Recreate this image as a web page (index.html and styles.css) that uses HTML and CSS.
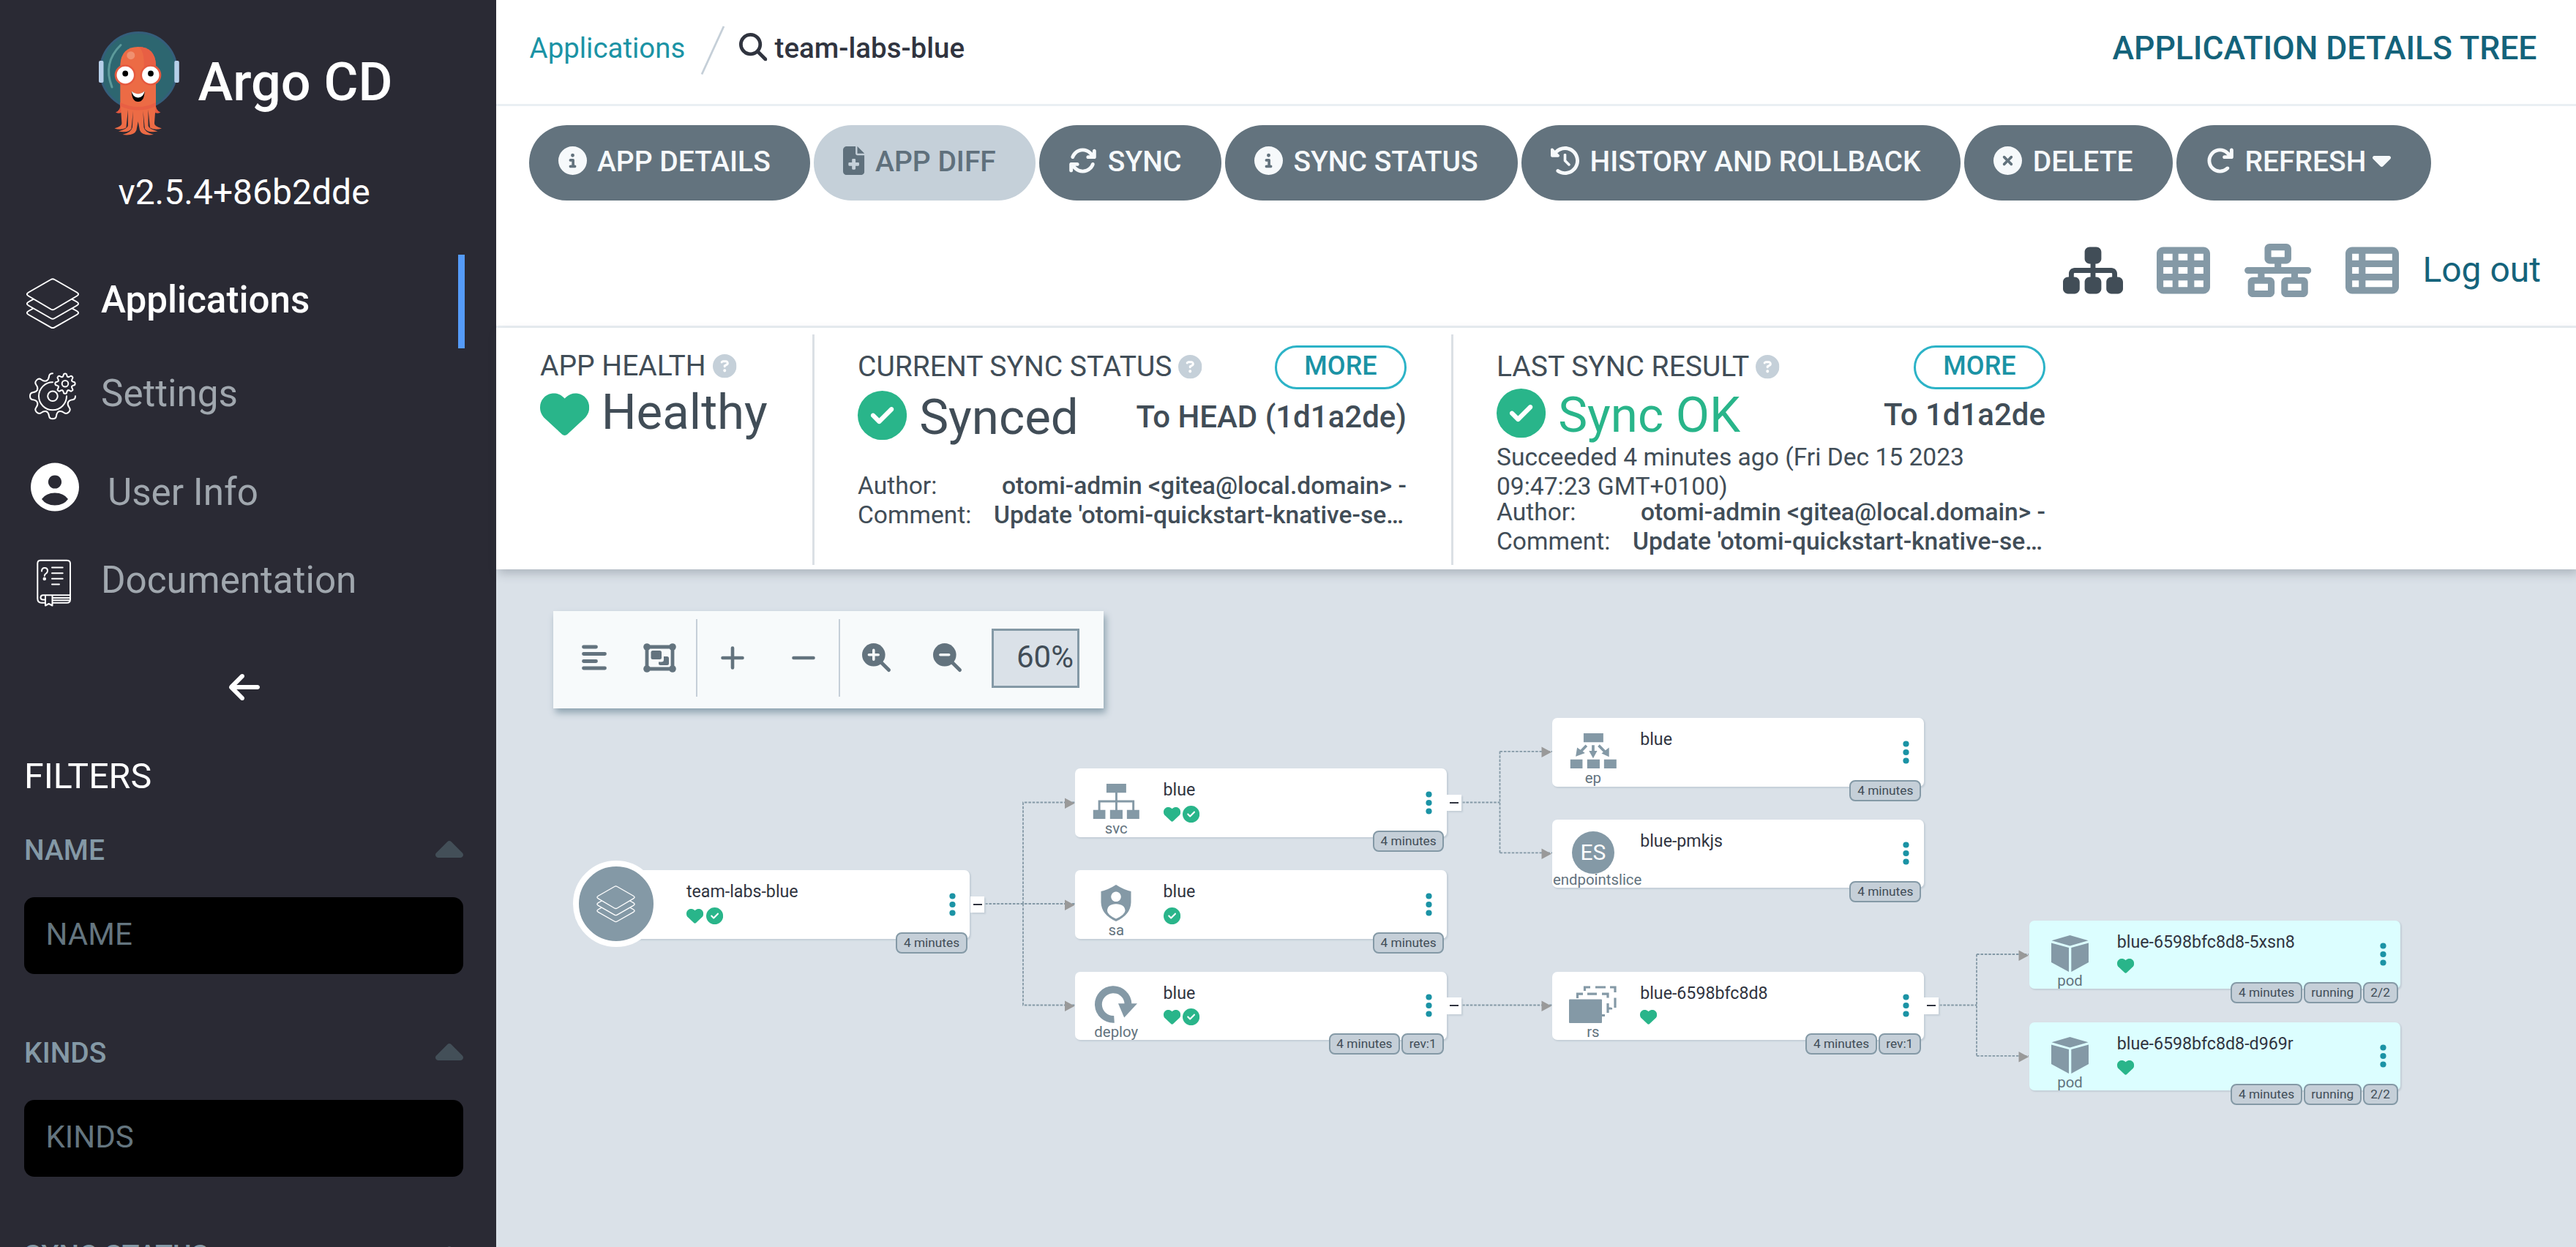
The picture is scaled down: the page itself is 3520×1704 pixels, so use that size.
FILE: index.html
```html
<!DOCTYPE html>
<html lang="en">
<head>
<meta charset="utf-8">
<title>team-labs-blue - Application Details Tree - Argo CD</title>
<link rel="stylesheet" href="styles.css">
</head>
<body>
<svg class="defs" width="0" height="0" aria-hidden="true">
  <defs>
    <symbol id="i-info" viewBox="0 0 512 512"><path d="M256 512A256 256 0 1 0 256 0a256 256 0 1 0 0 512zM216 336h24V272H216c-13.3 0-24-10.7-24-24s10.7-24 24-24h48c13.3 0 24 10.7 24 24v88h8c13.3 0 24 10.7 24 24s-10.7 24-24 24H216c-13.3 0-24-10.7-24-24s10.7-24 24-24zm40-208a32 32 0 1 1 0 64 32 32 0 1 1 0-64z"/></symbol>
    <symbol id="i-check" viewBox="0 0 512 512"><path d="M256 512A256 256 0 1 0 256 0a256 256 0 1 0 0 512zM369 209L241 337c-9.4 9.4-24.6 9.4-33.9 0l-64-64c-9.4-9.4-9.4-24.6 0-33.9s24.6-9.4 33.9 0l47 47L335 175c9.4-9.4 24.6-9.4 33.9 0s9.4 24.6 0 33.9z"/></symbol>
    <symbol id="i-xmark" viewBox="0 0 512 512"><path d="M256 512A256 256 0 1 0 256 0a256 256 0 1 0 0 512zM175 175c9.4-9.4 24.6-9.4 33.9 0l47 47 47-47c9.4-9.4 24.6-9.4 33.9 0s9.4 24.6 0 33.9l-47 47 47 47c9.4 9.4 9.4 24.6 0 33.9s-24.6 9.4-33.9 0l-47-47-47 47c-9.4 9.4-24.6 9.4-33.9 0s-9.4-24.6 0-33.9l47-47-47-47c-9.4-9.4-9.4-24.6 0-33.9z"/></symbol>
    <symbol id="i-help" viewBox="0 0 512 512"><path d="M256 512A256 256 0 1 0 256 0a256 256 0 1 0 0 512zM169.8 165.3c7.9-22.3 29.1-37.3 52.8-37.3h58.3c34.9 0 63.1 28.3 63.1 63.1c0 22.6-12.1 43.5-31.7 54.8L280 264.4c-.2 13-10.9 23.6-24 23.6c-13.3 0-24-10.7-24-24V250.5c0-8.6 4.6-16.5 12.1-20.8l44.3-25.4c4.7-2.7 7.6-7.7 7.6-13.1c0-8.4-6.8-15.1-15.1-15.1H222.6c-3.4 0-6.4 2.1-7.5 5.3l-.4 1.2c-4.4 12.5-18.2 19-30.6 14.6s-19-18.2-14.6-30.6l.4-1.2zM224 352a32 32 0 1 1 64 0 32 32 0 1 1 -64 0z"/></symbol>
    <symbol id="i-heart" viewBox="0 0 512 512"><path d="M47.6 300.4L228.3 469.1c7.5 7 17.4 10.9 27.7 10.9s20.2-3.9 27.7-10.9L464.4 300.4c30.4-28.3 47.6-68 47.6-109.5v-5.8c0-69.9-50.5-129.5-119.4-141C347 36.5 300.6 51.4 268 84L256 96 244 84c-32.6-32.6-79-47.5-124.6-39.9C50.5 55.6 0 115.2 0 185.1v5.8c0 41.5 17.2 81.2 47.6 109.5z"/></symbol>
    <symbol id="i-diff" viewBox="0 0 384 512"><path d="M64 0C28.7 0 0 28.7 0 64V448c0 35.3 28.7 64 64 64H320c35.3 0 64-28.7 64-64V160H256c-17.7 0-32-14.3-32-32V0H64zM256 0V128H384L256 0zM160 240c0-8.8 7.2-16 16-16h32c8.8 0 16 7.2 16 16v48h48c8.8 0 16 7.2 16 16v32c0 8.8-7.2 16-16 16H224v48c0 8.8-7.2 16-16 16H176c-8.8 0-16-7.2-16-16V352H112c-8.8 0-16-7.2-16-16V304c0-8.8 7.2-16 16-16h48V240z"/></symbol>
    <symbol id="i-search" viewBox="0 0 512 512"><path d="M416 208c0 45.9-14.9 88.3-40 122.7L502.6 457.4c12.5 12.5 12.5 32.8 0 45.3s-32.8 12.5-45.3 0L330.7 376c-34.4 25.2-76.8 40-122.7 40C93.1 416 0 322.9 0 208S93.1 0 208 0S416 93.1 416 208zM208 352a144 144 0 1 0 0-288 144 144 0 1 0 0 288z"/></symbol>
    <symbol id="i-sync" viewBox="0 0 512 512"><path d="M105.1 202.6c7.7-21.8 20.2-42.3 37.8-59.8c62.5-62.5 163.8-62.5 226.3 0L386.3 160H352c-17.7 0-32 14.3-32 32s14.3 32 32 32H463.5c0 0 0 0 0 0h.4c17.7 0 32-14.3 32-32V80c0-17.7-14.3-32-32-32s-32 14.3-32 32v35.2L414.4 97.6c-87.5-87.5-229.3-87.5-316.8 0C73.2 122 55.6 150.7 44.8 181.4c-5.9 16.7 2.9 34.9 19.5 40.8s34.9-2.9 40.8-19.5zM39 289.3c-5 1.5-9.8 4.2-13.7 8.2c-4 4-6.7 8.8-8.1 14c-.3 1.2-.6 2.5-.8 3.8c-.3 1.7-.4 3.4-.4 5.1V432c0 17.7 14.3 32 32 32s32-14.3 32-32V396.9l17.6 17.5c87.5 87.4 229.3 87.4 316.7 0c24.4-24.4 42.1-53.1 52.9-83.7c5.9-16.7-2.9-34.9-19.5-40.8s-34.9 2.9-40.8 19.5c-7.7 21.8-20.2 42.3-37.8 59.8c-62.5 62.5-163.8 62.5-226.3 0l-.1-.1L125.6 352H160c17.7 0 32-14.3 32-32s-14.3-32-32-32H48.4c-1.6 0-3.2 .1-4.8 .3s-3.1 .5-4.6 1z"/></symbol>
    <symbol id="i-refresh" viewBox="0 0 512 512"><path d="M386.3 160H336c-17.7 0-32 14.3-32 32s14.3 32 32 32H464c17.7 0 32-14.3 32-32V64c0-17.7-14.3-32-32-32s-32 14.3-32 32v51.2L414.4 97.6c-87.5-87.5-229.3-87.5-316.8 0s-87.5 229.3 0 316.8s229.3 87.5 316.8 0c12.5-12.5 12.5-32.8 0-45.3s-32.8-12.5-45.3 0c-62.5 62.5-163.8 62.5-226.3 0s-62.5-163.8 0-226.3s163.8-62.5 226.3 0L386.3 160z"/></symbol>
    <symbol id="i-history" viewBox="0 0 512 512"><path d="M75 75L41 41C25.9 25.9 0 36.6 0 57.9V168c0 13.3 10.7 24 24 24H134.1c21.4 0 32.1-25.9 17-41l-30.8-30.8C155 85.5 203 64 256 64c106 0 192 86 192 192s-86 192-192 192c-40.8 0-78.6-12.7-109.7-34.4c-14.5-10.1-34.4-6.6-44.6 7.9s-6.6 34.4 7.9 44.6C151.2 495 201.7 512 256 512c141.4 0 256-114.6 256-256S397.4 0 256 0C185.3 0 121.3 28.7 75 75zm181 53c-13.3 0-24 10.7-24 24V256c0 6.4 2.5 12.5 7 17l72 72c9.4 9.4 24.6 9.4 33.9 0s9.4-24.6 0-33.9l-65-65V152c0-13.3-10.7-24-24-24z"/></symbol>
    <symbol id="i-caret-down" viewBox="0 192 320 192"><path d="M137.4 374.6c12.5 12.5 32.8 12.5 45.3 0l128-128c9.2-9.2 11.9-22.9 6.9-34.9s-16.6-19.8-29.6-19.8L32 192c-12.9 0-24.6 7.8-29.6 19.8s-2.2 25.7 6.9 34.9l128 128z"/></symbol>
    <symbol id="i-caret-up" viewBox="0 128 320 192"><path d="M182.6 137.4c-12.5-12.5-32.8-12.5-45.3 0l-128 128c-9.2 9.2-11.9 22.9-6.9 34.9s16.6 19.8 29.6 19.8H288c12.9 0 24.6-7.8 29.6-19.8s2.2-25.7-6.9-34.9l-128-128z"/></symbol>
    <symbol id="i-arrow-left" viewBox="0 0 448 512"><path d="M9.4 233.4c-12.5 12.5-12.5 32.8 0 45.3l160 160c12.5 12.5 32.8 12.5 45.3 0s12.5-32.8 0-45.3L109.2 288 416 288c17.7 0 32-14.3 32-32s-14.3-32-32-32l-306.7 0L214.6 118.6c12.5-12.5 12.5-32.8 0-45.3s-32.8-12.5-45.3 0l-160 160z"/></symbol>
    <symbol id="i-sitemap" viewBox="0 0 576 512"><path d="M208 80c0-26.5 21.5-48 48-48h64c26.5 0 48 21.5 48 48v64c0 26.5-21.5 48-48 48h-8v40H464c30.9 0 56 25.1 56 56v32h8c26.5 0 48 21.5 48 48v64c0 26.5-21.5 48-48 48H464c-26.5 0-48-21.5-48-48V368c0-26.5 21.5-48 48-48h8V288c0-4.4-3.6-8-8-8H312v40h8c26.5 0 48 21.5 48 48v64c0 26.5-21.5 48-48 48H256c-26.5 0-48-21.5-48-48V368c0-26.5 21.5-48 48-48h8V280H112c-4.4 0-8 3.6-8 8v32h8c26.5 0 48 21.5 48 48v64c0 26.5-21.5 48-48 48H48c-26.5 0-48-21.5-48-48V368c0-26.5 21.5-48 48-48h8V288c0-30.9 25.1-56 56-56H264V192h-8c-26.5 0-48-21.5-48-48V80z"/></symbol>
    <symbol id="i-grid" viewBox="0 0 512 512"><path fill-rule="evenodd" d="M64 32C28.7 32 0 60.7 0 96v320c0 35.3 28.7 64 64 64h384c35.3 0 64-28.7 64-64V96c0-35.3-28.7-64-64-64zM64 96h88v64H64zM208 96h88v64h-88zM360 96h88v64h-88zM64 224h88v64H64zM208 224h88v64h-88zM360 224h88v64h-88zM64 352h88v64H64zM208 352h88v64h-88zM360 352h88v64h-88z"/></symbol>
    <symbol id="i-network" viewBox="0 0 640 512"><path fill-rule="evenodd" d="M256 64H384v64H256V64zM240 0c-26.5 0-48 21.5-48 48v96c0 26.5 21.5 48 48 48h48v32H32c-17.7 0-32 14.3-32 32s14.3 32 32 32h96v32H80c-26.5 0-48 21.5-48 48v96c0 26.5 21.5 48 48 48H240c26.5 0 48-21.5 48-48V368c0-26.5-21.5-48-48-48H192V288H448v32H400c-26.5 0-48 21.5-48 48v96c0 26.5 21.5 48 48 48H560c26.5 0 48-21.5 48-48V368c0-26.5-21.5-48-48-48H512V288h96c17.7 0 32-14.3 32-32s-14.3-32-32-32H352V192h48c26.5 0 48-21.5 48-48V48c0-26.5-21.5-48-48-48H240zM96 448V384H224v64H96zm320-64H544v64H416V384z"/></symbol>
    <symbol id="i-list" viewBox="0 0 512 512"><path fill-rule="evenodd" d="M0 96C0 60.7 28.7 32 64 32H448c35.3 0 64 28.7 64 64V416c0 35.3-28.7 64-64 64H64c-35.3 0-64-28.7-64-64V96zm64 0v64h64V96H64zm384 0H192v64H448V96zM64 224v64h64V224H64zm384 0H192v64H448V224zM64 352v64h64V352H64zm384 0H192v64H448V352z"/></symbol>
    <symbol id="i-stack" viewBox="3 10 72 70"><path fill="none" stroke="currentColor" stroke-linejoin="round" d="M36.5 12Q39 10.4 41.5 12L72 29.5Q76.3 32 72 34.5L41.5 52.5Q39 54 36.5 52.5L6 34.5Q1.7 32 6 29.5ZM12.5 38.8L6 42.5Q1.7 45 6 47.5L36.5 65Q39 66.5 41.5 65L72 47.5Q76.3 45 72 42.5L65.5 38.8M12.5 51.3L6 55Q1.7 57.5 6 60L36.5 77.3Q39 78.8 41.5 77.3L72 60Q76.3 57.5 72 55L65.5 51.3"/></symbol>
    <symbol id="i-dots" viewBox="0 0 9 32"><circle cx="4.5" cy="4.5" r="4.1"/><circle cx="4.5" cy="16" r="4.1"/><circle cx="4.5" cy="27.5" r="4.1"/></symbol>
    <symbol id="i-svc" viewBox="0 0 64 50"><path d="M18.500 0h27.500v12.500h-27.500zM0 36.500h17v12.500h-17zM23.500 36.500h17.500v12.500h-17.500zM47 36.500h17.300v12.500h-17.300z"/><path fill="none" stroke="currentColor" stroke-width="3" d="M32.300 12v25M8.500 37V24.500H56V37"/></symbol>
    <symbol id="i-ep" viewBox="0 0 64 50"><path d="M18.500 0h27.500v12.500h-27.500zM0 36.500h17v12.500h-17zM23.500 36.500h17.500v12.500h-17.500zM47 36.500h17.300v12.500h-17.300zM26 24.500h11.500l-5.700 10.500zM9.500 20l11 7.500-13 5zM54 20l-10.500 8 10.500 5z"/><path fill="none" stroke="currentColor" stroke-width="3.800" d="M31.800 16.500v11M22.500 17l-9 9.500M39.500 17l10 10"/></symbol>
    <symbol id="i-sa" viewBox="0 0 42 50"><path fill-rule="evenodd" d="M21 0Q31 6.500 41.500 9V24Q41 41 21 50Q1 41 .5 24V9Q11 6.500 21 0ZM21 9.500a6.800 6.800 0 1 0 .01 0ZM21 26.300C13 26.300 9 30 9 35.500Q9 41 21 46.500Q33 41 33.500 35.500C33.500 30 29 26.300 21 26.300Z"/></symbol>
    <symbol id="i-deploy" viewBox="0 0 58 51"><path fill="none" stroke="currentColor" stroke-width="9.800" d="M26.500 45.800A20.300 20.300 0 1 1 45.500 25"/><path d="M32 24.300H58L40.200 43.500Z"/></symbol>
    <symbol id="i-rs" viewBox="0 0 65 51"><rect y="18.500" width="45" height="32.500" rx="1"/><path fill="none" stroke="currentColor" stroke-width="3.200" d="M11.500 17V11.200H19M25 11.200H38M45 11.200H53V16.500M53 24V37M49 40.500H45M53 31h4.500V30M21.500 7V2H29M36 2H50M56 2H63V9M63 16.500V30"/></symbol>
    <symbol id="i-pod" viewBox="0 0 51 50"><path d="M25.500 0L50.500 7.200L25.500 14.500L.500 7.200ZM0 10.500L24 17V50L0 37ZM51 10.500L27.300 17V50L51 37Z"/></symbol>
    <path id="tooth" d="M-8.700 20.900Q-5.500 22.500-5 27Q-4.500 31 0 31Q4.500 31 5 27Q5.500 22.500 8.700 20.900"/>
    <g id="cog"><use href="#tooth"/><use href="#tooth" transform="rotate(45)"/><use href="#tooth" transform="rotate(90)"/><use href="#tooth" transform="rotate(135)"/><use href="#tooth" transform="rotate(180)"/><use href="#tooth" transform="rotate(225)"/><use href="#tooth" transform="rotate(270)"/><use href="#tooth" transform="rotate(315)"/></g>
  </defs>
</svg>

<div class="layout">
  <aside class="sidebar">
    <div class="brand">
      <svg class="brand-logo" viewBox="134 40 113 146">
        <circle cx="189.300" cy="96.500" r="52" fill="#2d6670" stroke="#355e7b" stroke-width="3"/>
        <rect x="135" y="83" width="6.500" height="30" rx="2" fill="#b6cfe9"/><rect x="238.300" y="83" width="6.500" height="30" rx="2" fill="#b6cfe9"/>
        <path d="M165 61.500Q140 86 153 119" fill="none" stroke="#5c9a9b" stroke-width="3" stroke-linecap="round"/>
        <path d="M165 140Q165 151 158 153.500Q164 156.500 169 152ZM212.400 140Q212.400 151 219.400 153.500Q213.400 156.500 208.400 152Z" fill="#e6593f"/>
        <path fill="#ec6b45" d="M164.500 140H213L211 168Q210 172 221 175.500Q212 178.500 205 174.500L202.500 150L202.500 172Q203.500 176 215.500 179.500Q202 182 198 176L195.500 152L196.500 174Q198 181 210 184Q194 186 191 178L188.700 166L186.400 178Q183.400 186 167.400 184Q179.400 181 180.900 174L181.900 152L179.400 176Q175.400 182 161.900 179.500Q173.900 176 174.900 172V150L172.400 174.500Q165.400 178.500 156.400 175.500Q167.400 172 166.400 168Z"/>
        <path fill="#ec6b45" d="M164.300 146V88Q166 64 188.700 64Q211.500 64 213 88V146Q188.700 154 164.300 146Z"/>
        <path fill="#e85f44" d="M190 64Q211.500 65 213 88V100H196Q199 72 190 64ZM164.300 140Q188.700 152 213 140V145Q188.700 156 164.300 145Z"/>
        <circle cx="171" cy="102.500" r="14.300" fill="#e6593f"/><circle cx="206" cy="102.500" r="14.300" fill="#e6593f"/>
        <circle cx="171.200" cy="102.500" r="11.700" fill="#fff"/><circle cx="205.800" cy="102.500" r="11.700" fill="#fff"/>
        <circle cx="171.200" cy="100.500" r="3.900" fill="#000"/><circle cx="206" cy="100.500" r="3.900" fill="#000"/>
        <path d="M179.700 125Q188.700 132 197.600 125Q197 139 188.700 139Q180.500 139 179.700 125Z" fill="#000"/>
        <path d="M179.700 124.500Q188.700 132 197.600 124.500Q196 133 188.700 133.500Q181.500 133 179.700 124.500Z" fill="#fff"/>
        <ellipse cx="178.800" cy="75.700" rx="5.500" ry="5.500" fill="#f09070"/>
      </svg>
      <span class="brand-name">Argo CD</span>
    </div>
    <div class="version">v2.5.4+86b2dde</div>
    <nav class="nav">
      <a class="nav-item nav-item-active">
        <svg class="nav-icon" viewBox="0 0 80 80"><use href="#i-stack" x="3" y="10" width="72" height="70" stroke-width="2"/></svg>
        <span>Applications</span>
      </a>
      <a class="nav-item">
        <svg class="nav-icon nav-icon-line" viewBox="0 0 80 80">
          <g transform="translate(39 43.300)">
            <use href="#tooth"/><use href="#tooth" transform="rotate(45)"/><use href="#tooth" transform="rotate(90)"/><use href="#tooth" transform="rotate(135)"/><use href="#tooth" transform="rotate(-45)"/>
            <path d="M-8.700-20.900Q-5.500-22.500-5-27Q-4.500-31 0-31M20.900 8.700Q22.500 5.500 27 5Q31 4.500 31 0M0-19A19 19 0 1 0 19 0"/>
            <circle r="6.800"/>
          </g>
          <g transform="translate(56 26.200)"><g class="cog-small" transform="scale(.44)"><use href="#cog"/></g><circle r="4.300"/></g>
        </svg>
        <span>Settings</span>
      </a>
      <a class="nav-item nav-item-user">
        <svg class="nav-icon" viewBox="0 0 80 80"><path fill="currentColor" fill-rule="evenodd" d="M42 -.5a33 33 0 1 0 .01 0ZM42 16.400a9.100 9.100 0 1 1-.01 0ZM42 57.500Q30 57.500 24 49Q30 40.500 42 40.500Q54 40.500 60 49Q54 57.500 42 57.500Z"/></svg>
        <span>User Info</span>
      </a>
      <a class="nav-item nav-item-docs">
        <svg class="nav-icon nav-icon-line" viewBox="0 0 80 80">
          <path d="M28 70.800H24Q18.300 70.800 18.300 65V17Q18.300 12.700 22.500 12.700H58Q63 12.700 63 17V66Q63 70.800 58.500 70.800H39M63 60.200H26Q22.500 60.200 22.500 63.500Q22.500 66.500 26 66.500H28.500M39 64H63M39 67.300H62M29 60.200V74.500L33.700 72L38.500 74.500V60.200M38 22.500H52.700M38 30.200H52.700M38 37.800H52.700M38 45.500H48M24 27.500Q24 23 28 23Q32 23 32 27Q32 29.500 29.500 31Q27.800 32 27.800 34"/>
          <circle cx="27.800" cy="38" r="1.300"/>
        </svg>
        <span>Documentation</span>
      </a>
    </nav>
    <div class="collapse"><svg class="collapse-icon"><use href="#i-arrow-left"/></svg></div>
    <section class="filters">
      <div class="filters-title">FILTERS</div>
      <div class="filter-head"><span>NAME</span><svg class="filter-caret"><use href="#i-caret-up"/></svg></div>
      <div class="filter-input">NAME</div>
      <div class="filter-head filter-head-next"><span>KINDS</span><svg class="filter-caret"><use href="#i-caret-up"/></svg></div>
      <div class="filter-input">KINDS</div>
      <div class="filter-head filter-head-next"><span>SYNC STATUS</span><svg class="filter-caret"><use href="#i-caret-up"/></svg></div>
    </section>
  </aside>

  <main class="main">
    <header class="topbar">
      <div class="crumbs">
        <a class="crumb-link">Applications</a>
        <svg class="crumb-sep" viewBox="0 0 32 72"><path d="M1 71.500L31 6" stroke="#c5cfd8" stroke-width="2.800" fill="none"/></svg>
        <svg class="crumb-search"><use href="#i-search"/></svg>
        <span class="crumb-current">team-labs-blue</span>
      </div>
      <h1 class="page-title">APPLICATION DETAILS TREE</h1>
    </header>

    <div class="toolbar">
      <div class="actions">
        <a class="btn"><svg class="btn-icon"><use href="#i-info"/></svg>APP DETAILS</a>
        <a class="btn btn-disabled"><svg class="btn-icon btn-icon-narrow"><use href="#i-diff"/></svg>APP DIFF</a>
        <a class="btn"><svg class="btn-icon"><use href="#i-sync"/></svg>SYNC</a>
        <a class="btn"><svg class="btn-icon"><use href="#i-info"/></svg>SYNC STATUS</a>
        <a class="btn"><svg class="btn-icon"><use href="#i-history"/></svg>HISTORY AND ROLLBACK</a>
        <a class="btn"><svg class="btn-icon"><use href="#i-xmark"/></svg>DELETE</a>
        <a class="btn"><svg class="btn-icon"><use href="#i-refresh"/></svg>REFRESH<svg class="btn-caret"><use href="#i-caret-down"/></svg></a>
      </div>
      <div class="views">
        <svg class="view view-tree view-active"><use href="#i-sitemap"/></svg>
        <svg class="view"><use href="#i-grid"/></svg>
        <svg class="view view-network"><use href="#i-network"/></svg>
        <svg class="view"><use href="#i-list"/></svg>
        <a class="logout">Log out</a>
      </div>
    </div>

    <section class="summary">
      <div class="cell cell-health">
        <div class="cell-head"><span class="cell-label">APP HEALTH</span><svg class="help"><use href="#i-help"/></svg></div>
        <div class="cell-value"><svg class="status-icon status-heart"><use href="#i-heart"/></svg><span>Healthy</span></div>
      </div>
      <div class="cell cell-sync">
        <div class="cell-head"><span class="cell-label">CURRENT SYNC STATUS</span><svg class="help"><use href="#i-help"/></svg><a class="more">MORE</a></div>
        <div class="cell-value"><svg class="status-icon"><use href="#i-check"/></svg><span>Synced</span><b class="revision">To HEAD (1d1a2de)</b></div>
        <dl class="meta">
          <dt>Author:</dt><dd class="author">otomi-admin &lt;gitea@local.domain&gt; -</dd>
          <dt>Comment:</dt><dd>Update 'otomi-quickstart-knative-se…</dd>
        </dl>
      </div>
      <div class="cell cell-result">
        <div class="cell-head"><span class="cell-label">LAST SYNC RESULT</span><svg class="help"><use href="#i-help"/></svg><a class="more">MORE</a></div>
        <div class="cell-value"><svg class="status-icon"><use href="#i-check"/></svg><span class="ok">Sync OK</span><b class="revision">To 1d1a2de</b></div>
        <p class="when">Succeeded 4 minutes ago (Fri Dec 15 2023 09:47:23 GMT+0100)</p>
        <dl class="meta">
          <dt>Author:</dt><dd class="author">otomi-admin &lt;gitea@local.domain&gt; -</dd>
          <dt>Comment:</dt><dd>Update 'otomi-quickstart-knative-se…</dd>
        </dl>
      </div>
    </section>

    <section class="canvas">
      <svg class="edges" viewBox="678 778 2842 926">
        <g class="edge-lines">
          <path d="M1346 1235H1469M1398 1235V1096.500H1469M1398 1235V1373.500H1469"/>
          <path d="M1998 1096.500H2049.500M2049.500 1026.800H2121M2049.500 1165.300H2121M2049.500 1026.800V1165.300"/>
          <path d="M1998 1373.500H2121M2650 1373.500H2701M2701 1304H2772M2701 1442.800H2772M2701 1304V1442.800"/>
        </g>
        <path class="edge-arrows" d="M1455 1090.500v14.500l13.500-7.200zM1455 1229.500v14.500l13.500-7.200zM1455 1367.500v14.500l13.500-7.200zM2106.500 1020.500v14.500l13.500-7.200zM2106.500 1159.500v14.500l13.500-7.200zM2106.500 1367.500v14.500l13.500-7.200zM2758.500 1298.500v14.500l13.500-7.200zM2758.500 1437v14.500l13.500-7.200z"/>
      </svg>

      <div class="graph-tools">
        <svg class="tool tool-align" viewBox="0 0 34 36"><path d="M2.500 3H19.500M2.500 12.500H31.500M2.500 22.500H19.500M2.500 32H31.500" fill="none" stroke="currentColor" stroke-width="4.800" stroke-linecap="round"/></svg>
        <svg class="tool tool-group" viewBox="0 0 45 40"><path d="M5 5H40V35H5Z" fill="none" stroke="currentColor" stroke-width="4.800"/><circle cx="5" cy="5" r="4.800"/><circle cx="40" cy="5" r="4.800"/><circle cx="5" cy="35" r="4.800"/><circle cx="40" cy="35" r="4.800"/><rect x="10.500" y="10" width="14.500" height="12" rx="2.500"/><path d="M28 18H32.500Q35 18 35 20.500V27.500Q35 30 32.500 30H23.500Q21 30 21 27.500V25.500H25Q28 25.500 28 22.500Z"/></svg>
        <i class="tool-sep"></i>
        <svg class="tool tool-plus" viewBox="0 0 32 32"><path d="M2.500 16H29.500M16 2.500V29.500" fill="none" stroke="currentColor" stroke-width="4.600" stroke-linecap="round"/></svg>
        <svg class="tool tool-minus" viewBox="0 0 32 32"><path d="M2.500 16H29.500" fill="none" stroke="currentColor" stroke-width="4.600" stroke-linecap="round"/></svg>
        <i class="tool-sep"></i>
        <svg class="tool tool-zoom-in" viewBox="0 0 40 40"><circle cx="16" cy="16" r="16"/><path d="M26 26L37 37" stroke="currentColor" stroke-width="5" stroke-linecap="round"/><path d="M9.500 16H22.500M16 9.500V22.500" stroke="#f7fafb" stroke-width="3.600" stroke-linecap="round"/></svg>
        <svg class="tool tool-zoom-out" viewBox="0 0 40 40"><circle cx="16" cy="16" r="16"/><path d="M26 26L37 37" stroke="currentColor" stroke-width="5" stroke-linecap="round"/><path d="M10 16H22" stroke="#f7fafb" stroke-width="3.600" stroke-linecap="round"/></svg>
        <div class="zoom-value">60%</div>
      </div>

      <article class="node" style="left:139.8px;top:411px">
        <div class="root-badge"><svg class="root-icon"><use href="#i-stack"/></svg></div>
        <div class="node-kind"></div>
        <div class="node-body"><div class="node-title">team-labs-blue</div><div class="node-status"><svg class="dot-icon"><use href="#i-heart"/></svg><svg class="dot-icon"><use href="#i-check"/></svg></div></div>
        <svg class="node-menu"><use href="#i-dots"/></svg><span class="fold"></span>
        <div class="tags"><span>4 minutes</span></div>
      </article>

      <article class="node" style="left:791.4px;top:272.300px">
        <div class="node-kind"><div class="kind-icon"><svg width="64.300" height="49"><use href="#i-svc"/></svg></div><span>svc</span></div>
        <div class="node-body"><div class="node-title">blue</div><div class="node-status"><svg class="dot-icon"><use href="#i-heart"/></svg><svg class="dot-icon"><use href="#i-check"/></svg></div></div>
        <svg class="node-menu"><use href="#i-dots"/></svg><span class="fold"></span>
        <div class="tags"><span>4 minutes</span></div>
      </article>

      <article class="node" style="left:791.4px;top:411px">
        <div class="node-kind"><div class="kind-icon"><svg width="42" height="50"><use href="#i-sa"/></svg></div><span>sa</span></div>
        <div class="node-body"><div class="node-title">blue</div><div class="node-status"><svg class="dot-icon"><use href="#i-check"/></svg></div></div>
        <svg class="node-menu"><use href="#i-dots"/></svg>
        <div class="tags"><span>4 minutes</span></div>
      </article>

      <article class="node" style="left:791.4px;top:549.600px">
        <div class="node-kind"><div class="kind-icon"><svg width="58" height="51"><use href="#i-deploy"/></svg></div><span>deploy</span></div>
        <div class="node-body"><div class="node-title">blue</div><div class="node-status"><svg class="dot-icon"><use href="#i-heart"/></svg><svg class="dot-icon"><use href="#i-check"/></svg></div></div>
        <svg class="node-menu"><use href="#i-dots"/></svg><span class="fold"></span>
        <div class="tags"><span>4 minutes</span><span>rev:1</span></div>
      </article>

      <article class="node" style="left:1443px;top:203px">
        <div class="node-kind"><div class="kind-icon"><svg width="64.300" height="49"><use href="#i-ep"/></svg></div><span>ep</span></div>
        <div class="node-body"><div class="node-title">blue</div></div>
        <svg class="node-menu"><use href="#i-dots"/></svg>
        <div class="tags"><span>4 minutes</span></div>
      </article>

      <article class="node" style="left:1443px;top:341.600px">
        <div class="node-kind"><div class="kind-icon"><b class="kind-initials">ES</b></div><span>endpointslice</span></div>
        <div class="node-body"><div class="node-title">blue-pmkjs</div></div>
        <svg class="node-menu"><use href="#i-dots"/></svg>
        <div class="tags"><span>4 minutes</span></div>
      </article>

      <article class="node" style="left:1443px;top:549.600px">
        <div class="node-kind"><div class="kind-icon"><svg width="65" height="51"><use href="#i-rs"/></svg></div><span>rs</span></div>
        <div class="node-body"><div class="node-title">blue-6598bfc8d8</div><div class="node-status"><svg class="dot-icon"><use href="#i-heart"/></svg></div></div>
        <svg class="node-menu"><use href="#i-dots"/></svg><span class="fold"></span>
        <div class="tags"><span>4 minutes</span><span>rev:1</span></div>
      </article>

      <article class="node node-pod" style="left:2094.6px;top:479.800px">
        <div class="node-kind"><div class="kind-icon"><svg width="51" height="50"><use href="#i-pod"/></svg></div><span>pod</span></div>
        <div class="node-body"><div class="node-title">blue-6598bfc8d8-5xsn8</div><div class="node-status"><svg class="dot-icon"><use href="#i-heart"/></svg></div></div>
        <svg class="node-menu"><use href="#i-dots"/></svg>
        <div class="tags"><span>4 minutes</span><span>running</span><span>2/2</span></div>
      </article>

      <article class="node node-pod" style="left:2094.6px;top:618.500px">
        <div class="node-kind"><div class="kind-icon"><svg width="51" height="50"><use href="#i-pod"/></svg></div><span>pod</span></div>
        <div class="node-body"><div class="node-title">blue-6598bfc8d8-d969r</div><div class="node-status"><svg class="dot-icon"><use href="#i-heart"/></svg></div></div>
        <svg class="node-menu"><use href="#i-dots"/></svg>
        <div class="tags"><span>4 minutes</span><span>running</span><span>2/2</span></div>
      </article>
    </section>
  </main>
</div>
</body>
</html>
```
FILE: styles.css
```css
* { box-sizing: border-box; }
body { margin: 0; font-family: Roboto, sans-serif; font-size: 39px; color: #414d57; background: #dae1e8; }
svg { display: block; flex: none; fill: currentColor; overflow: visible; }
.defs { position: absolute; }
.layout { display: flex; height: 1704px; overflow: hidden; }

/* Sidebar */
.sidebar { flex: none; width: 678px; height: 1704px; overflow: hidden; padding-left: 33px; background: #2a2a34; color: #fff; }
.brand { display: flex; align-items: center; height: 225px; padding-left: 100.5px; }
.brand-logo { width: 113px; height: 146px; margin-top: 1px; }
.brand-name { margin-left: 24px; font-size: 72px; font-weight: 500; line-height: 84px; white-space: nowrap; }
.version { width: 601px; height: 76px; font-size: 48px; line-height: 76px; text-align: center; }
.nav { margin-top: 47px; }
.nav-item { display: flex; align-items: center; gap: 25px; width: 602px; height: 128px; padding-bottom: 5px; font-size: 51.2px; line-height: 60px; color: #a0a7ae; white-space: nowrap; }
.nav-item-active { color: #fff; font-weight: 500; border-right: 9px solid #559bf8; }
.nav-item-user { height: 142px; gap: 34px; }
.nav-item-docs { height: 98px; }
.nav-icon { width: 80px; height: 80px; color: #fff; }
.nav-icon-line { fill: none; stroke: #fff; stroke-width: 2; stroke-linecap: round; stroke-linejoin: round; }
.cog-small { stroke-width: 4.6; }
.collapse { display: flex; align-items: center; justify-content: center; width: 602px; height: 190px; }
.collapse-icon { width: 42px; height: 48px; }
.filters-title { height: 53px; font-size: 48.3px; line-height: 53px; }
.filter-head { display: flex; align-items: center; justify-content: space-between; width: 600px; height: 51px; margin-top: 50px; font-weight: 500; line-height: 51px; color: #8499a6; }
.filter-head-next { margin-top: 83px; }
.filter-caret { width: 38px; height: 23px; margin-bottom: 5px; color: #434f58; }
.filter-input { width: 600px; height: 105px; margin-top: 38px; padding-left: 29.5px; border-radius: 14px; background: #000; color: #64757f; font-size: 42px; line-height: 101px; }

/* Top bar */
.main { flex: 1; min-width: 0; display: flex; flex-direction: column; }
.topbar { display: flex; align-items: center; justify-content: space-between; height: 145px; padding: 0 53.5px 10px 45.6px; border-bottom: 3px solid #eaeff3; background: #fff; }
.crumbs { display: flex; align-items: center; font-size: 38.4px; line-height: 46px; }
.crumb-link { color: #1b93a5; }
.crumb-sep { width: 32px; height: 72px; margin: 0 20px 0 21.5px; }
.crumb-search { width: 38.4px; height: 38.4px; margin: 0 10.5px 3px 0; color: #30343f; }
.crumb-current { color: #30343f; font-size: 38.5px; font-weight: 500; }
.page-title { margin: 0; font-size: 44.5px; line-height: 52px; font-weight: 500; color: #14637b; }

/* Actions and view switcher */
.toolbar { height: 303px; padding-top: 26px; border-bottom: 3px solid #eaeff3; background: #fff; }
.actions { display: flex; gap: 5.3px; padding-left: 44.5px; }
.btn { display: flex; align-items: center; height: 103px; padding: 0 54.2px 4px 40px; border-radius: 52px; background: #63737e; color: #f6f9fb; font-weight: 500; line-height: 46px; white-space: nowrap; }
.btn-disabled { background: #c5d0d9; color: #5f707c; }
.btn-icon { width: 39px; height: 39px; margin: 0 14.5px 3px 0; }
.btn-icon-narrow { width: 29.3px; }
.btn-caret { width: 25px; height: 15px; margin-left: 9px; }
.views { display: flex; align-items: center; justify-content: flex-end; gap: 46.5px; height: 90px; margin-top: 50px; padding-right: 48px; color: #8499a6; }
.view { width: 73px; height: 73px; }
.view-tree { width: 82px; }
.view-network { width: 91.4px; }
.view-active { color: #414d57; }
.logout { margin-left: -14px; font-size: 48px; line-height: 56px; color: #14637b; }

/* Status summary */
.summary { position: relative; display: flex; height: 330px; padding: 9px 0 6px; background: #fff; box-shadow: 3px 6px 12px rgba(65, 77, 87, .28); z-index: 1; }
.cell { height: 315px; padding-top: 15px; }
.cell + .cell { border-left: 3px solid #dbe0e5; }
.cell-health { width: 431.5px; padding: 13px 0 0 60px; }
.cell-sync { width: 873px; padding-left: 59.5px; }
.cell-result { width: 870px; padding-left: 59.5px; }
.cell-head { display: flex; align-items: center; width: 750px; height: 60px; line-height: 46px; padding-bottom: 2px; }
.cell-health .cell-head, .cell-health .cell-value { width: auto; }
.cell-health .cell-head { padding-bottom: 0; }
.help { width: 32.5px; height: 32.5px; margin: 1px 0 0 9px; color: #c5d0d9; }
.more { width: 180px; height: 60px; margin: 0 0 -2px auto; border: 3px solid #2cb3c7; border-radius: 30px; color: #1b93a5; font-size: 36px; font-weight: 500; line-height: 51px; text-align: center; }
.cell-value { display: flex; align-items: center; width: 750px; height: 76px; font-size: 67.2px; line-height: 76px; }
.cell-health .cell-value { height: 66px; line-height: 66px; }
.cell-result .cell-value { height: 70px; line-height: 70px; }
.status-icon { width: 67.2px; height: 67.2px; margin: 0 17px 4px 0; color: #29b58a; }
.status-heart { margin: 5px 16.5px 0 0; }
.ok { color: #29b58a; }
.revision { margin-left: auto; font-size: 42px; font-weight: 500; }
.meta { display: grid; grid-template-columns: 186px 564px; width: 750px; margin: 35.5px 0 0; font-size: 33.6px; line-height: 40px; white-space: nowrap; }
.meta dd { margin: 0; font-weight: 500; }
.meta .author { text-align: right; }
.when { width: 750px; margin: 3px 0 0; font-size: 33.6px; line-height: 40px; }
.cell-result .meta { margin-top: -5px; }

/* Resource tree */
.canvas { position: relative; flex: 1; overflow: hidden; background: #dae1e8; }
.edges { position: absolute; left: 0; top: 0; width: 2842px; height: 926px; }
.edge-lines { fill: none; stroke: #8499a6; stroke-width: 1.8; stroke-dasharray: 3.6 1.8; }
.edge-arrows { fill: #999; }
.graph-tools { position: absolute; left: 78px; top: 57px; display: flex; align-items: center; width: 752px; height: 133px; padding: 0 0 5px 39px; background: #f7fafb; color: #63737e; box-shadow: 3px 6px 9px #8fa4b1; }
.tool-align { width: 34px; height: 36px; }
.tool-group { width: 45px; height: 40px; margin: 0 26.5px 0 50px; }
.tool-sep { flex: none; width: 2.5px; height: 106px; background: #c5cfd8; }
.tool-plus { width: 32px; height: 32px; margin-left: 32px; }
.tool-minus { width: 32px; height: 32px; margin: 0 32px 0 64.5px; }
.tool-zoom-in { width: 39.5px; height: 39.5px; margin-left: 30px; }
.tool-zoom-out { width: 39.5px; height: 39.5px; margin-left: 57.5px; }
.zoom-value { width: 120px; height: 81px; margin: 1px 0 0 40px; padding-right: 4.5px; border: 3px solid #8499a6; background: #dae1e8; color: #414d57; font-size: 42px; line-height: 71px; text-align: right; }

.node { position: absolute; display: flex; width: 507.6px; height: 93.6px; border-radius: 7px; background: #fff; box-shadow: 1.8px 1.8px 1.8px #c5cfd8; }
.node-pod { background: #dcfeff; }
.node-kind { flex: none; width: 110px; margin-left: .9px; padding-top: 13.2px; font-size: 20.4px; line-height: 11px; text-align: center; white-space: nowrap; color: #63737e; }
.kind-icon { display: flex; align-items: center; justify-content: center; height: 64px; color: #8499a6; }
.kind-initials { width: 58px; height: 58px; border-radius: 50%; background: #8499a6; color: #fff; font-size: 30px; font-weight: 400; line-height: 58px; }
.node-body { padding: 16.2px 0 0 9.3px; }
.node-title { font-size: 23.2px; line-height: 27px; color: #30343f; white-space: nowrap; }
.node-status { display: flex; align-items: center; gap: 3.6px; height: 38px; color: #29b58a; }
.dot-icon { width: 23.2px; height: 23.2px; }
.node-menu { position: absolute; left: 479px; top: 30.5px; width: 9px; height: 32px; color: #1b93a5; }
.fold { position: absolute; left: 508px; top: 35.5px; display: flex; align-items: center; justify-content: center; width: 19.5px; height: 22.5px; background: #fff; box-shadow: 1.8px 1.8px 1.8px #c5cfd8; }
.fold::after { content: ""; width: 12px; height: 2px; background: #30343f; }
.tags { position: absolute; right: 3.6px; top: 84.6px; display: flex; gap: 1.8px; }
.tags span { height: 29px; padding: 0 8.7px; border: 2px solid #8499a6; border-radius: 8px; background: #c5cfd8; color: #414d57; font-size: 17.3px; line-height: 24px; white-space: nowrap; }
.root-badge { position: absolute; left: -35px; top: -13px; display: flex; align-items: center; justify-content: center; width: 118px; height: 118px; border: 8px solid #fff; border-radius: 50%; background: #8499a6; color: #fff; }
.root-icon { width: 53px; height: 51px; stroke-width: 1.8; }
```
